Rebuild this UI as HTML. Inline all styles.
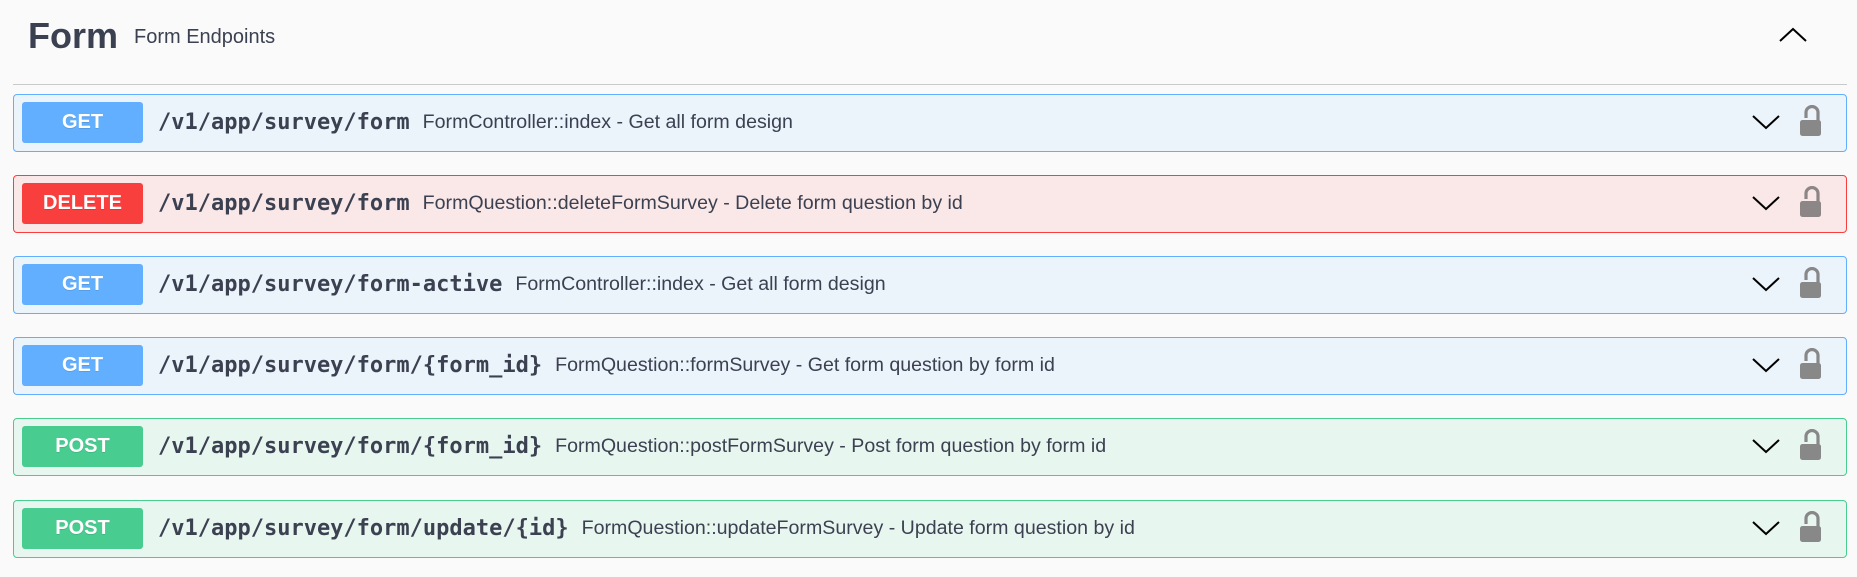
<!DOCTYPE html>
<html><head><meta charset="utf-8"><style>
html,body{margin:0;padding:0;background:#fafafa;width:1857px;height:577px;overflow:hidden;font-family:"Liberation Sans",Arial,sans-serif;color:#3b4151}
.h{position:absolute;left:28px;top:15px;font-size:36px;font-weight:bold;color:#3b4151}
.sub{position:absolute;left:134px;top:26px;font-size:20px;color:#3b4151}
.div{position:absolute;left:13px;width:1834px;top:84px;height:1px;background:#c9c9c9}
.row{position:absolute;left:13px;width:1832px;height:56px;border:1px solid;border-radius:4px}
.b{position:absolute;left:8px;top:7px;width:121px;height:41px;border-radius:3px;color:#fff;font-weight:bold;font-size:20px;text-align:center;line-height:41px;text-shadow:0 1px 0 rgba(0,0,0,.1)}
.p{position:absolute;left:144px;top:15px;font-family:"DejaVu Sans Mono","Liberation Mono",monospace;font-weight:bold;font-size:22px;color:#3b4151;white-space:nowrap}
.p span{font-family:"Liberation Sans",Arial,sans-serif;font-weight:normal;font-size:19.6px;margin-left:13px;position:relative;top:-1px}
.get{background:#ebf3fb;border-color:#61affe}.get .b{background:#61affe}
.del{background:#fae7e7;border-color:#f93e3e}.del .b{background:#f93e3e}
.post{background:#e8f6f0;border-color:#49cc90}.post .b{background:#49cc90}
.ic{position:absolute;left:1738px;top:10px}
</style></head><body>
<div class="h">Form</div><div class="sub">Form Endpoints</div>
<svg style="position:absolute;left:1778px;top:26px" width="30" height="18"><path d="M2 15 L15 3 L28 15" fill="none" stroke="#000" stroke-width="2"/></svg>
<div class="div"></div>

<div class="row get" style="top:94px"><div class="b">GET</div><div class="p">/v1/app/survey/form<span>FormController::index - Get all form design</span></div>
<svg class="ic" width="90" height="40"><path d="M1 11 L14 23 L27 11" fill="none" stroke="#000" stroke-width="2"/><path d="M54 13 V7.5 a6 6 0 0 1 12 0 V16" fill="none" stroke="#888" stroke-width="3.2"/><rect x="48" y="15" width="21" height="16" rx="2.5" fill="#888"/></svg></div>

<div class="row del" style="top:175px"><div class="b">DELETE</div><div class="p">/v1/app/survey/form<span>FormQuestion::deleteFormSurvey - Delete form question by id</span></div>
<svg class="ic" width="90" height="40"><path d="M1 11 L14 23 L27 11" fill="none" stroke="#000" stroke-width="2"/><path d="M54 13 V7.5 a6 6 0 0 1 12 0 V16" fill="none" stroke="#8d8686" stroke-width="3.2"/><rect x="48" y="15" width="21" height="16" rx="2.5" fill="#8d8686"/></svg></div>

<div class="row get" style="top:256px"><div class="b">GET</div><div class="p">/v1/app/survey/form-active<span>FormController::index - Get all form design</span></div>
<svg class="ic" width="90" height="40"><path d="M1 11 L14 23 L27 11" fill="none" stroke="#000" stroke-width="2"/><path d="M54 13 V7.5 a6 6 0 0 1 12 0 V16" fill="none" stroke="#888" stroke-width="3.2"/><rect x="48" y="15" width="21" height="16" rx="2.5" fill="#888"/></svg></div>

<div class="row get" style="top:337px"><div class="b">GET</div><div class="p">/v1/app/survey/form/{form_id}<span>FormQuestion::formSurvey - Get form question by form id</span></div>
<svg class="ic" width="90" height="40"><path d="M1 11 L14 23 L27 11" fill="none" stroke="#000" stroke-width="2"/><path d="M54 13 V7.5 a6 6 0 0 1 12 0 V16" fill="none" stroke="#888" stroke-width="3.2"/><rect x="48" y="15" width="21" height="16" rx="2.5" fill="#888"/></svg></div>

<div class="row post" style="top:418px"><div class="b">POST</div><div class="p">/v1/app/survey/form/{form_id}<span>FormQuestion::postFormSurvey - Post form question by form id</span></div>
<svg class="ic" width="90" height="40"><path d="M1 11 L14 23 L27 11" fill="none" stroke="#000" stroke-width="2"/><path d="M54 13 V7.5 a6 6 0 0 1 12 0 V16" fill="none" stroke="#888" stroke-width="3.2"/><rect x="48" y="15" width="21" height="16" rx="2.5" fill="#888"/></svg></div>

<div class="row post" style="top:500px"><div class="b">POST</div><div class="p">/v1/app/survey/form/update/{id}<span>FormQuestion::updateFormSurvey - Update form question by id</span></div>
<svg class="ic" width="90" height="40"><path d="M1 11 L14 23 L27 11" fill="none" stroke="#000" stroke-width="2"/><path d="M54 13 V7.5 a6 6 0 0 1 12 0 V16" fill="none" stroke="#888" stroke-width="3.2"/><rect x="48" y="15" width="21" height="16" rx="2.5" fill="#888"/></svg></div>
</body></html>
